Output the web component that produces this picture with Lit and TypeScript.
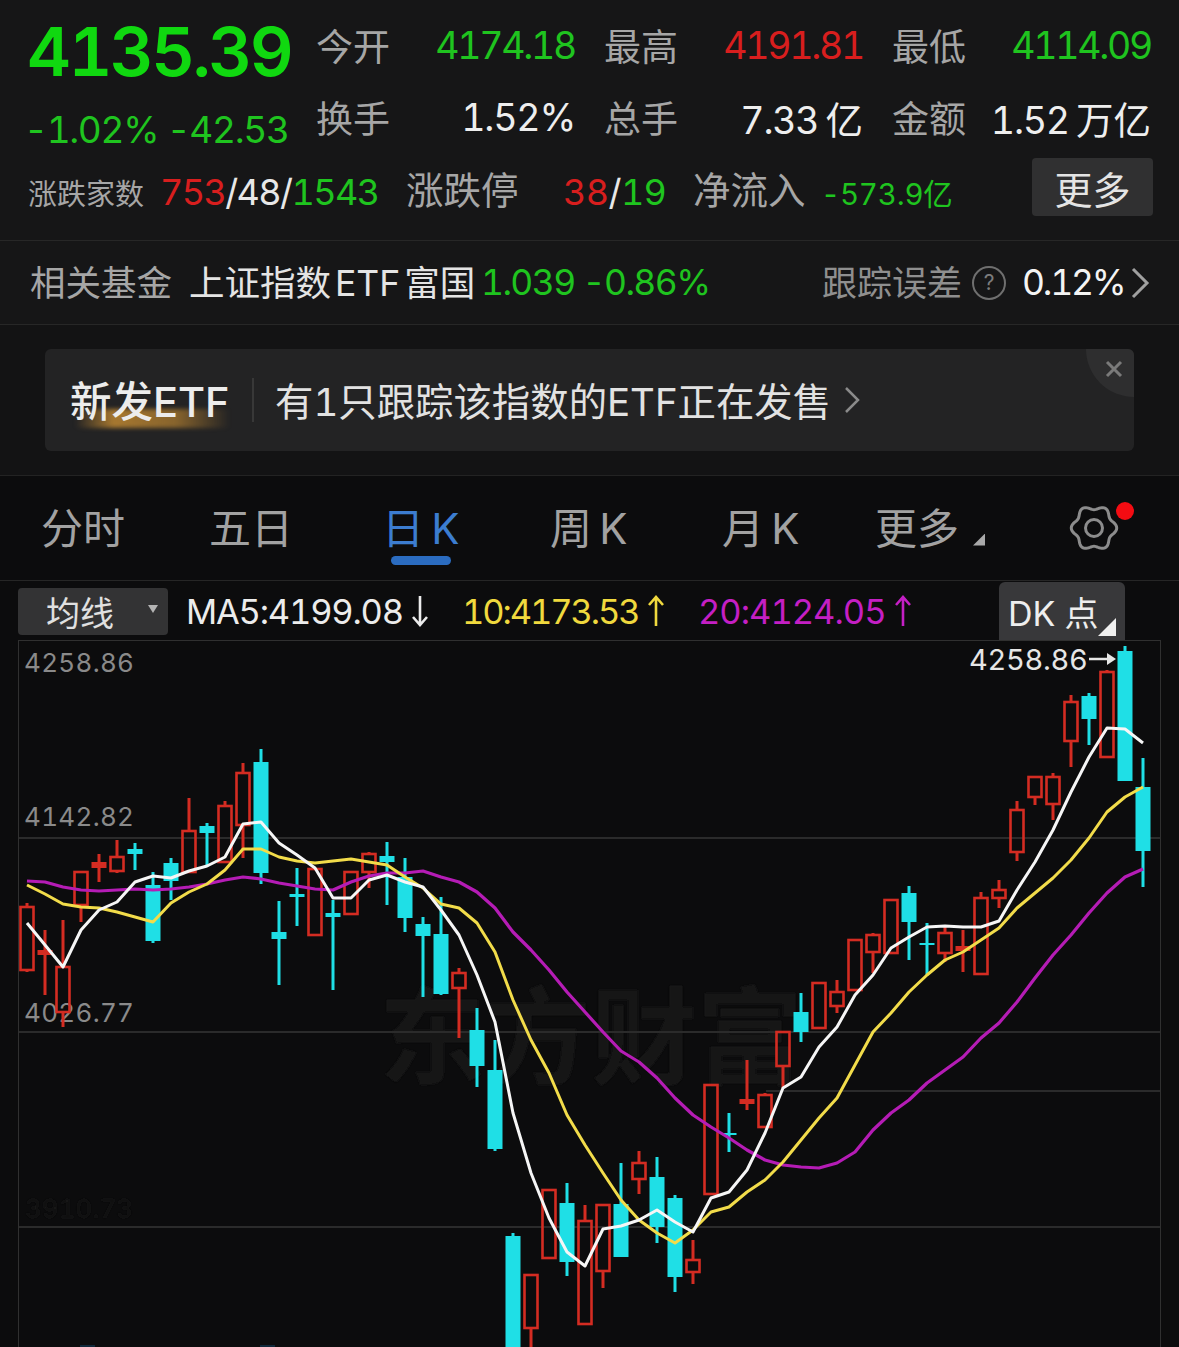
import { LitElement, html, css, svg } from "lit";
import { customElement } from "lit/decorators.js";

// [x, wickTop, bodyTop, bodyBottom, wickBottom, colour] in page coordinates
type C = [number, number, number, number, number, "r" | "c"];
const candles: C[] = [
  [27, 903, 907, 970, 972, "r"], [45, 930, 950, 955, 995, "r"], [63, 920, 967, 1012, 1027, "r"],
  [81, 872, 872, 905, 922, "r"], [99, 854, 862, 868, 882, "r"], [117, 840, 857, 871, 873, "r"],
  [135, 843, 849, 854, 870, "c"], [153, 872, 885, 941, 943, "c"], [171, 858, 863, 881, 900, "c"],
  [189, 798, 831, 872, 873, "r"], [207, 823, 826, 833, 867, "c"], [225, 801, 806, 862, 863, "r"],
  [243, 763, 773, 825, 858, "r"], [261, 749, 762, 873, 884, "c"], [279, 901, 932, 939, 985, "c"],
  [297, 868, 894, 897, 926, "c"], [315, 869, 869, 935, 935, "r"], [333, 900, 913, 917, 990, "c"],
  [351, 872, 872, 914, 914, "r"], [369, 852, 854, 872, 888, "r"], [387, 842, 856, 862, 905, "c"],
  [405, 858, 877, 918, 932, "c"], [423, 917, 924, 936, 997, "c"], [441, 897, 934, 994, 995, "c"],
  [459, 968, 973, 988, 1038, "r"], [477, 1008, 1030, 1066, 1087, "c"], [495, 1040, 1070, 1149, 1151, "c"],
  [513, 1233, 1236, 1360, 1360, "c"], [531, 1275, 1275, 1328, 1360, "r"], [549, 1190, 1190, 1258, 1258, "r"],
  [567, 1183, 1203, 1262, 1276, "c"], [585, 1205, 1221, 1324, 1324, "r"], [603, 1205, 1205, 1271, 1288, "r"],
  [621, 1163, 1204, 1257, 1257, "c"], [639, 1151, 1163, 1179, 1194, "r"], [657, 1157, 1177, 1227, 1243, "c"],
  [675, 1195, 1198, 1277, 1292, "c"], [693, 1240, 1260, 1272, 1284, "r"], [711, 1085, 1085, 1194, 1194, "r"],
  [729, 1113, 1133, 1135, 1152, "c"], [747, 1060, 1099, 1104, 1110, "r"], [765, 1093, 1095, 1127, 1127, "r"],
  [783, 1032, 1032, 1066, 1088, "r"], [801, 993, 1012, 1032, 1042, "c"], [819, 982, 983, 1028, 1029, "r"],
  [837, 980, 992, 1006, 1013, "r"], [855, 940, 940, 990, 990, "r"], [873, 933, 935, 952, 973, "r"],
  [891, 900, 900, 953, 953, "r"], [909, 886, 893, 922, 960, "c"], [927, 923, 943, 945, 975, "c"],
  [945, 925, 933, 953, 962, "r"], [963, 930, 946, 951, 972, "r"], [981, 892, 898, 974, 974, "r"],
  [999, 880, 890, 898, 908, "r"], [1017, 801, 810, 852, 861, "r"], [1035, 777, 777, 797, 805, "r"],
  [1053, 773, 777, 804, 820, "r"], [1071, 695, 702, 741, 767, "r"], [1089, 693, 696, 719, 745, "c"],
  [1107, 670, 672, 757, 757, "r"], [1125, 646, 651, 781, 781, "c"], [1143, 758, 787, 851, 887, "c"],
];

const xs = (start: number, ys: number[]) => ys.map((y, i) => `${start + i * 18},${y}`).join(" ");
const ma5 = xs(27, [923, 945, 967, 930, 910, 902, 882, 876, 878, 871, 866, 857, 824, 822, 843, 855, 868, 898, 898, 880, 875, 882, 887, 910, 935, 975, 1022, 1113, 1173, 1218, 1252, 1266, 1229, 1226, 1220, 1210, 1222, 1232, 1198, 1192, 1170, 1133, 1088, 1077, 1047, 1027, 995, 975, 948, 937, 927, 926, 927, 927, 921, 890, 862, 830, 792, 757, 728, 729, 743]);
const ma10 = xs(27, [885, 894, 904, 907, 908, 912, 917, 922, 903, 892, 884, 870, 849, 849, 857, 861, 863, 861, 859, 862, 865, 877, 888, 904, 908, 923, 952, 1000, 1040, 1073, 1115, 1145, 1173, 1200, 1220, 1233, 1243, 1230, 1212, 1207, 1192, 1180, 1162, 1140, 1118, 1098, 1065, 1032, 1013, 992, 975, 960, 952, 940, 928, 908, 893, 878, 860, 838, 812, 797, 787]);
const ma20 = xs(27, [881, 882, 887, 890, 891, 890, 889, 890, 889, 887, 884, 880, 877, 879, 883, 886, 889, 890, 882, 876, 873, 873, 871, 877, 882, 892, 908, 932, 950, 970, 992, 1012, 1032, 1051, 1062, 1078, 1098, 1115, 1127, 1138, 1150, 1160, 1165, 1167, 1168, 1163, 1152, 1130, 1113, 1100, 1083, 1070, 1057, 1038, 1023, 1002, 978, 955, 935, 913, 893, 877, 869]);

const gearPath = () => {
  const pts: string[] = [];
  for (let i = 0; i < 120; i++) {
    const t = (i / 120) * Math.PI * 2;
    const r = 20.5 + 2.2 * Math.cos(6 * t);
    pts.push(`${(25 + r * Math.cos(t)).toFixed(2)},${(25 + r * Math.sin(t)).toFixed(2)}`);
  }
  return `M${pts.join("L")}Z`;
};

const RED = "#d42c22";
const CYAN = "#1fdfe6";

@customElement("app-root")
export class AppRoot extends LitElement {
  static styles = css`
    :host {
      display: block;
      width: 1179px;
      height: 1347px;
      overflow: hidden;
      background: #0c0c0d;
      font-family: Inter, "Noto Sans CJK SC", sans-serif;
      font-variant-numeric: tabular-nums;
      color: #e8e8e8;
    }
    .quote { background: #161617; height: 240px; box-sizing: border-box; padding-top: 9px; }
    .top { display: grid; grid-template-columns: 258px 259px 259px 259px; column-gap: 29px; grid-auto-rows: 72px; padding-left: 29px; }
    .cell { display: flex; justify-content: space-between; align-items: center; }
    .lab { font-size: 37px; color: #a6a6a6; white-space: nowrap; }
    .val { font-size: 37.5px; white-space: nowrap; letter-spacing: -2.3px; padding-top: 1px; }
    .val.white { letter-spacing: -1.2px; }
    .val b { font-weight: 400; margin-left: 7px; letter-spacing: 0; }
    .price { font-size: 68px; font-weight: 600; color: #10d810; letter-spacing: -2.6px; white-space: nowrap; line-height: 72px; padding-top: 6px; height: 66px; margin-left: -2px; }
    .chg { font-size: 37px; color: #1fc41f; white-space: nowrap; line-height: 72px; padding-top: 13px; height: 59px; letter-spacing: -1.35px; margin-left: -5px; }
    .green { color: #1fc41f; }
    .red { color: #d81e1e; }
    .white { color: #eeeeee; }
    .stats { display: flex; align-items: center; height: 58px; margin-top: 5px; padding-left: 28px; white-space: nowrap; }
    .s1 { font-size: 29px; color: #a6a6a6; width: 132px; padding-top: 10px; }
    .s2 { font-size: 36px; width: 246px; letter-spacing: -1.6px; padding-top: 10px; line-height: 48px; }
    .s3 { font-size: 37.5px; color: #a6a6a6; width: 157px; }
    .s4 { font-size: 36px; width: 130px; letter-spacing: -0.6px; padding-top: 10px; line-height: 48px; }
    .s5 { font-size: 37.5px; color: #a6a6a6; width: 128px; }
    .s6 { font-size: 29.5px; color: #1fc41f; width: 211px; padding-top: 10px; letter-spacing: -0.2px; }
    .more { width: 121px; height: 58px; display: flex; align-items: center; justify-content: center; background: #303031; border-radius: 4px; font-size: 38px; color: #e4e4e4; }

    .fund { height: 83px; background: #161617; border-top: 1px solid #272727; border-bottom: 1px solid #272727; display: flex; align-items: center; padding-left: 30px; white-space: nowrap; }
    .f1 { font-size: 35.5px; color: #a6a6a6; width: 159px; padding-bottom: 5px; }
    .f2 { font-size: 35.5px; color: #e4e4e4; width: 292px; padding-bottom: 5px; }
    .f2 b { font-weight: 400; margin: 0 4px; }
    .f3 { font-size: 35.5px; color: #1fc41f; width: 341px; letter-spacing: -1.6px; }
    .f4 { font-size: 35px; color: #8f8f8f; width: 150px; padding-bottom: 5px; }
    .help { width: 34px; height: 34px; border: 2px solid #6f6f6f; box-sizing: border-box; border-radius: 50%; display: flex; align-items: center; justify-content: center; font-size: 21px; color: #7c7c7c; margin-right: 16px; }
    .f5 { font-size: 35.5px; color: #f4f4f4; width: 108px; letter-spacing: -2.2px; }
    .chev { display: block; }

    .promo { height: 151px; box-sizing: border-box; background: #131314; border-bottom: 1px solid #232323; padding: 24px 45px 0; }
    .card { position: relative; overflow: hidden; height: 102px; width: 1089px; background: #232324; border-radius: 6px; display: flex; align-items: center; padding-left: 25px; box-sizing: border-box; white-space: nowrap; }
    .badge { position: relative; font-size: 41.5px; font-weight: 500; color: #ececec; width: 182px; padding-bottom: 2px; }
    .glow { position: absolute; left: 5px; top: 40px; width: 155px; height: 19px; background: linear-gradient(90deg, rgba(190,135,50,0), rgba(190,135,50,.85) 25%, rgba(190,135,50,.65) 65%, rgba(190,135,50,0)); filter: blur(2px); }
    .badge-text { position: relative; }
    .sep { width: 2px; height: 44px; background: #383838; margin-right: 21px; }
    .msg { font-size: 38.4px; color: #e2e2e2; margin-right: 13px; padding-bottom: 2px; }
    .corner { position: absolute; right: -48px; top: -48px; width: 96px; height: 96px; border-radius: 50%; background: #2e2e2f; }
    .x { position: absolute; right: 10px; top: 10px; display: block; }

    .tabs { position: relative; height: 105px; display: grid; grid-template-columns: 168px 173px 168px 172px 153px 194px 60px; padding-left: 41px; align-items: center; border-bottom: 1px solid #262626; box-sizing: border-box; word-spacing: -4px; }
    .tab { position: relative; font-size: 42px; color: #a2a2a2; white-space: nowrap; display: flex; align-items: center; padding-bottom: 5px; }
    .tab.on { color: #3c7dd0; }
    .bar { position: absolute; left: 9px; top: 61px; width: 60px; height: 9px; border-radius: 5px; background: #2b6cc0; }
    .tri { width: 12px; height: 12px; margin: 28px 0 0 14px; background: #a9a9a9; clip-path: polygon(100% 0, 100% 100%, 0 100%); }
    .gear { position: relative; width: 80px; height: 50px; }
    .gear svg { display: block; }
    .dot { position: absolute; left: 47px; top: -1px; width: 18px; height: 18px; border-radius: 50%; background: #f40c12; }

    .mas { height: 59px; display: flex; align-items: center; padding: 1px 0 0 18px; box-sizing: border-box; white-space: nowrap; }
    .select { position: relative; width: 150px; height: 47px; background: #333334; border-radius: 4px; margin-right: 18px; display: flex; align-items: center; padding-left: 28px; box-sizing: border-box; font-size: 34px; color: #e0e0e0; }
    .select i { position: absolute; right: 10px; top: 17px; border: 5px solid transparent; border-top: 8px solid #b4b4b4; border-bottom: 0; }
    .ma { font-size: 34.5px; display: flex; align-items: center; }
    .ma svg { margin-left: 8px; }
    .m5 { color: #ececec; width: 276px; letter-spacing: -1.2px; }
    .m10 { color: #f0d93e; width: 236px; letter-spacing: -2.1px; }
    .m20 { color: #c41fc4; width: 301px; letter-spacing: -1px; }
    .dk { position: relative; align-self: flex-end; width: 126px; height: 58px; background: #38383a; border-radius: 6px 6px 0 0; box-sizing: border-box; padding-left: 9px; display: flex; align-items: center; font-size: 34px; color: #eeeeee; }
    .dk i { position: absolute; right: 9px; bottom: 4px; width: 18px; height: 18px; background: #f0f0f0; clip-path: polygon(100% 0, 100% 100%, 0 100%); }

    .chart { display: block; }
    .axis { font-size: 26px; fill: #8a8a8a; font-family: Inter, sans-serif; font-variant-numeric: tabular-nums; letter-spacing: 0.3px; }
    .maxl { font-size: 29px; fill: #e6e6e6; font-family: Inter, sans-serif; font-variant-numeric: tabular-nums; letter-spacing: -0.3px; }
    .wm { font-size: 106px; font-weight: 700; fill: #181818; font-family: "Noto Sans CJK SC", sans-serif; }
    .ghost { font-size: 26px; fill: #161616; font-family: Inter, sans-serif; font-variant-numeric: tabular-nums; }
  `;

  private arrow(color: string, up: boolean) {
    return html`<svg width="18" height="32" viewBox="0 0 18 32" fill="none" stroke=${color} stroke-width="2.6">
      ${up
        ? svg`<path d="M9 31V2M2 10L9 2L16 10"></path>`
        : svg`<path d="M9 1V30M2 22L9 30L16 22"></path>`}
    </svg>`;
  }

  private chart() {
    return svg`
      <text class="wm" x="379" y="1076" filter="url(#b)">东方财富</text>
      <g stroke="#2b2b2b" stroke-width="2">
        <line x1="18" y1="838" x2="1160" y2="838"></line>
        <line x1="18" y1="1032" x2="1160" y2="1032"></line>
        <line x1="766" y1="1091" x2="1160" y2="1091"></line>
        <line x1="18" y1="1227" x2="1160" y2="1227"></line>
      </g>
      <rect x="18.5" y="640.5" width="1142" height="720" fill="none" stroke="#303030"></rect>
      <text class="axis" x="24" y="672">4258.86</text>
      <text class="axis" x="24" y="826">4142.82</text>
      <text class="axis" x="24" y="1022">4026.77</text>
      <text class="ghost" x="25" y="1218" filter="url(#b)">3910.73</text>
      <rect x="80" y="1345" width="15" height="2" fill="#10283a"></rect>
      <rect x="260" y="1345" width="15" height="2" fill="#10283a"></rect>
      ${candles.map(([x, wt, bt, bb, wb, k]) => {
        const col = k === "r" ? RED : CYAN;
        const thin = bb - bt <= 7;
        return svg`
          <line x1=${x} y1=${wt} x2=${x} y2=${bt} stroke=${col} stroke-width="3"></line>
          <line x1=${x} y1=${bb} x2=${x} y2=${wb} stroke=${col} stroke-width="3"></line>
          ${k === "c" || thin
            ? svg`<rect x=${x - 7.5} y=${bt} width="15" height=${Math.max(bb - bt, 2)} fill=${col}></rect>`
            : svg`<rect x=${x - 6.5} y=${bt} width="13" height=${bb - bt} fill="none" stroke=${col} stroke-width="2.6"></rect>`}
        `;
      })}
      <polyline points=${ma20} fill="none" stroke="#b51cb5" stroke-width="3.2" stroke-linejoin="round"></polyline>
      <polyline points=${ma10} fill="none" stroke="#f2dc4a" stroke-width="3" stroke-linejoin="round"></polyline>
      <polyline points=${ma5} fill="none" stroke="#f6f6f6" stroke-width="3" stroke-linejoin="round"></polyline>
      <text class="maxl" x="969" y="670">4258.86</text>
      <path d="M1089 659H1112" stroke="#e6e6e6" stroke-width="2.5"></path>
      <path d="M1107 653L1116 659L1107 665Z" fill="#e6e6e6"></path>
    `;
  }

  render() {
    return html`
      <section class="quote">
        <div class="top">
          <div class="price">4135.39</div>
          <div class="cell"><span class="lab">今开</span><span class="val green">4174.18</span></div>
          <div class="cell"><span class="lab">最高</span><span class="val red">4191.81</span></div>
          <div class="cell"><span class="lab">最低</span><span class="val green">4114.09</span></div>
          <div class="chg">-1.02% -42.53</div>
          <div class="cell"><span class="lab">换手</span><span class="val white">1.52%</span></div>
          <div class="cell"><span class="lab">总手</span><span class="val white">7.33<b>亿</b></span></div>
          <div class="cell"><span class="lab">金额</span><span class="val white">1.52<b>万亿</b></span></div>
        </div>
        <div class="stats">
          <span class="s1">涨跌家数</span>
          <span class="s2"><span class="red">753</span>/48/<span class="green">1543</span></span>
          <span class="s3">涨跌停</span>
          <span class="s4"><span class="red">38</span>/<span class="green">19</span></span>
          <span class="s5">净流入</span>
          <span class="s6">-573.9亿</span>
          <span class="more">更多</span>
        </div>
      </section>

      <section class="fund">
        <span class="f1">相关基金</span>
        <span class="f2">上证指数<b>ETF</b>富国</span>
        <span class="f3">1.039 -0.86%</span>
        <span class="f4">跟踪误差</span>
        <span class="help">?</span>
        <span class="f5">0.12%</span>
        <svg class="chev" width="20" height="34" viewBox="0 0 20 34" fill="none" stroke="#a0a0a0" stroke-width="3"><path d="M3 3L17 17L3 31"></path></svg>
      </section>

      <section class="promo">
        <div class="card">
          <span class="badge"><span class="glow"></span><span class="badge-text">新发ETF</span></span>
          <span class="sep"></span>
          <span class="msg">有1只跟踪该指数的ETF正在发售</span>
          <svg width="16" height="30" viewBox="0 0 16 30" fill="none" stroke="#8a8a8a" stroke-width="2.5"><path d="M2 3L14 15L2 27"></path></svg>
          <span class="corner"></span>
          <svg class="x" width="20" height="20" viewBox="0 0 20 20" stroke="#7a7a7a" stroke-width="3"><path d="M3 3L17 17M17 3L3 17"></path></svg>
        </div>
      </section>

      <nav class="tabs">
        <span class="tab">分时</span>
        <span class="tab">五日</span>
        <span class="tab on">日 K<span class="bar"></span></span>
        <span class="tab">周 K</span>
        <span class="tab">月 K</span>
        <span class="tab">更多<span class="tri"></span></span>
        <span class="gear">
          <svg width="50" height="50" viewBox="0 0 50 50" fill="none" stroke="#8c8c8c" stroke-width="3">
            <path d=${gearPath()}></path><circle cx="25" cy="25" r="8.5"></circle>
          </svg>
          <span class="dot"></span>
        </span>
      </nav>

      <div class="mas">
        <span class="select">均线<i></i></span>
        <span class="ma m5">MA5:4199.08${this.arrow("#ececec", false)}</span>
        <span class="ma m10">10:4173.53${this.arrow("#f0d93e", true)}</span>
        <span class="ma m20">20:4124.05${this.arrow("#c41fc4", true)}</span>
        <span class="dk">DK 点<i></i></span>
      </div>

      <svg class="chart" width="1179" height="707" viewBox="0 640 1179 707">
        <defs><filter id="b"><feGaussianBlur stdDeviation="1.2"></feGaussianBlur></filter></defs>
        ${this.chart()}
      </svg>
    `;
  }
}
